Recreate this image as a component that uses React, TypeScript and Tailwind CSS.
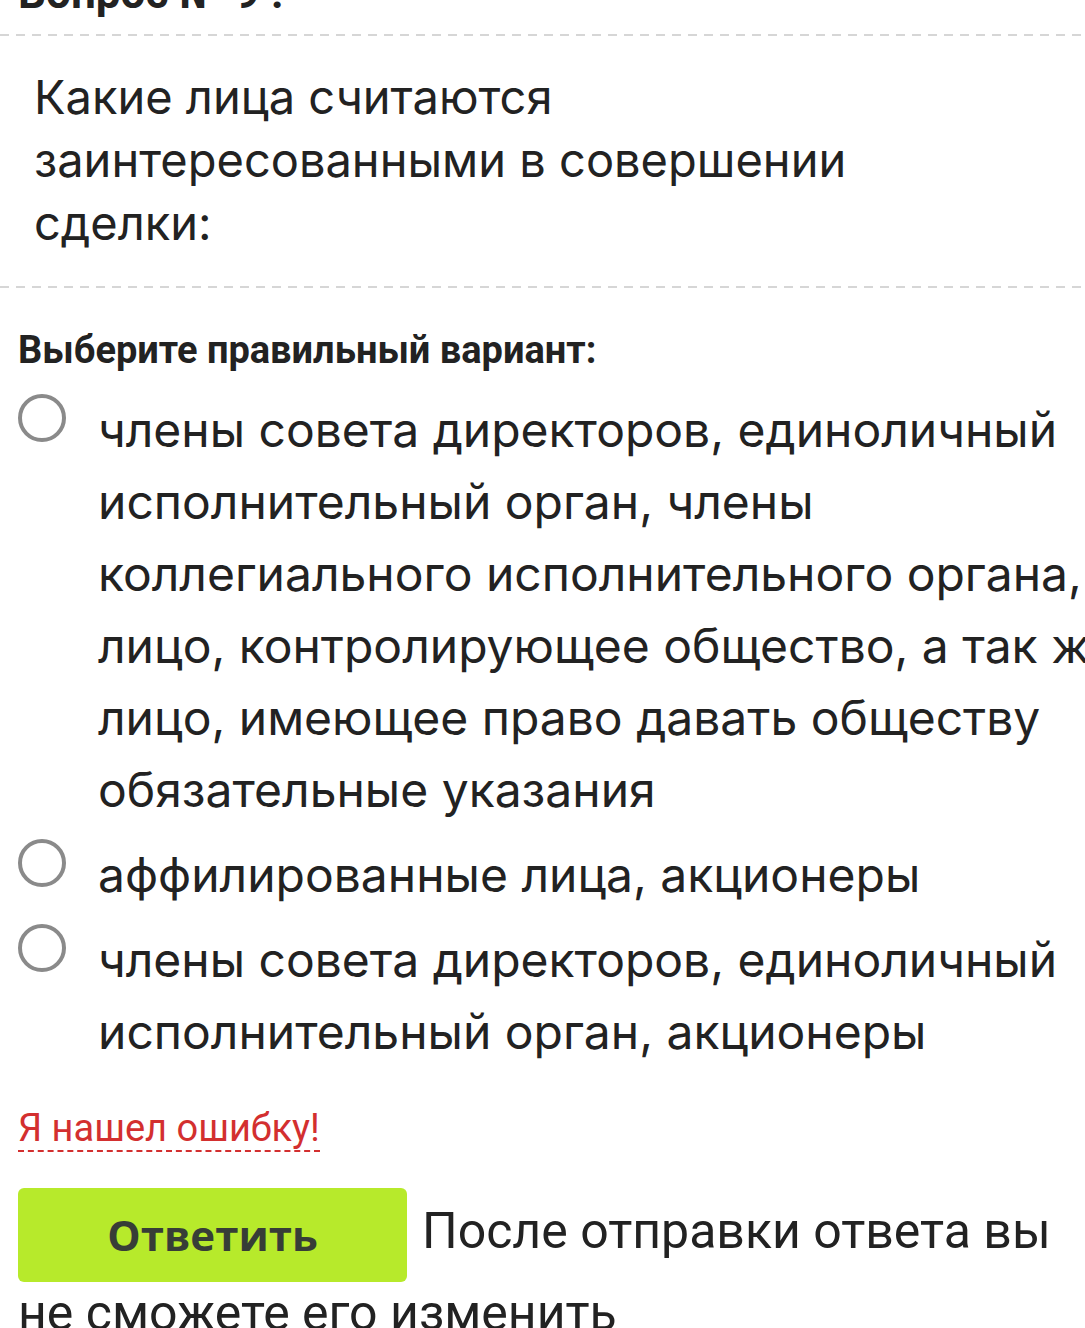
import React from 'react';

const options = [
  'члены совета директоров, единоличный исполнительный орган, члены коллегиального исполнительного органа, лицо, контролирующее общество, а так же лицо, имеющее право давать обществу обязательные указания',
  'аффилированные лица, акционеры',
  'члены совета директоров, единоличный исполнительный орган, акционеры',
];

function Dashed() {
  return (
    <div className="h-[2px] w-full bg-[repeating-linear-gradient(90deg,#d6d6d6_0_9px,transparent_9px_16px)]" />
  );
}

export default function App() {
  return (
    <div className="w-[1085px] h-[1328px] overflow-hidden bg-white text-[#222]">
      {/* Heading, scrolled out of view */}
      <div className="h-[34px] overflow-hidden relative">
        <h2 className="absolute left-[18px] bottom-[19px] font-['Roboto',sans-serif] font-bold text-[44px] leading-none text-[#222]">
          Вопрос № 9 :
        </h2>
      </div>
      <Dashed />

      {/* Question */}
      <div className="pl-[34px] pt-[29px] pb-[32px] w-[920px] font-['Inter',sans-serif] text-[47px] leading-[63px]">
        Какие лица считаются заинтересованными в совершении сделки:
      </div>
      <Dashed />

      <div className="px-[18px] pt-[40px]">
        <div className="font-['Roboto',sans-serif] font-bold text-[38px] leading-[44px] text-[#222]">
          Выберите правильный вариант:
        </div>

        <div className="mt-[22px] flex flex-col gap-[13px]">
          {options.map((opt, i) => (
            <label key={i} className="flex items-start">
              <span className="shrink-0 w-[48px] h-[48px] rounded-full border-[4px] border-[#8a8a8a] bg-white" />
              <span className="ml-[32px] w-[1040px] shrink-0 font-['Inter',sans-serif] text-[48px] leading-[72px] text-[#222]">
                {opt}
              </span>
            </label>
          ))}
        </div>

        <div className="mt-[38px] leading-[44px]">
          <span className="font-['Roboto',sans-serif] text-[38px] text-[#d32f2f] border-b-2 border-dashed border-[#d32f2f]">
            Я нашел ошибку!
          </span>
        </div>

        <div className="mt-[31px] font-['Roboto',sans-serif] text-[50px] leading-[62px] text-[#222]">
          <button className="inline-block align-middle w-[389px] h-[94px] rounded-[6px] bg-[#b7ea2b] font-['Open_Sans',sans-serif] font-bold text-[42px] leading-none text-[#373d37] mr-[15px]">
            Ответить
          </button>
          После отправки ответа вы не сможете его изменить
        </div>
      </div>
    </div>
  );
}
